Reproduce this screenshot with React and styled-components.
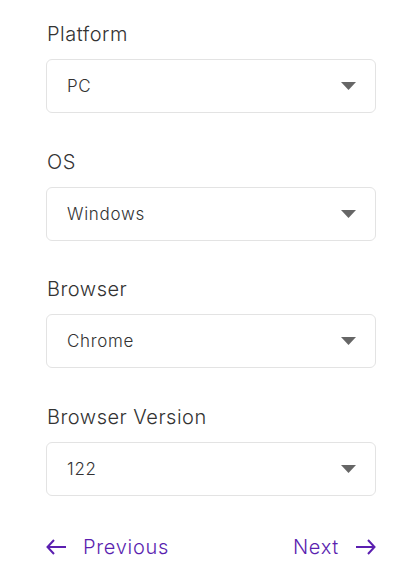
import React from 'react';
import styled, { createGlobalStyle } from 'styled-components';

const GlobalStyle = createGlobalStyle`
  body {
    margin: 0;
    background: #fff;
    font-family: 'Inter', 'Noto Sans', sans-serif;
  }
`;

const Form = styled.div`
  width: 330px;
  padding: 22px 0 0 46px;
  display: flex;
  flex-direction: column;
  gap: 36.67px;
`;

const Field = styled.div`
  display: flex;
  flex-direction: column;
  gap: 13px;
`;

const Label = styled.label`
  font-size: 20px;
  font-weight: 300;
  letter-spacing: 0.5px;
  line-height: 24px;
  color: #333;
  padding-left: 1px;
`;

const Select = styled.div`
  height: 54px;
  box-sizing: border-box;
  border: 1px solid #e3e3e3;
  border-radius: 6px;
  display: flex;
  align-items: center;
  justify-content: space-between;
  padding: 0 19px 0 20px;
  font-size: 17px;
  font-weight: 300;
  letter-spacing: 0.7px;
  color: #333;
`;

const Caret = styled.svg`
  width: 15px;
  height: 8px;
  fill: #666;
`;

const Nav = styled.div`
  display: flex;
  justify-content: space-between;
  align-items: center;
  margin-top: 2px;
`;

const NavButton = styled.button`
  display: flex;
  align-items: center;
  gap: 16px;
  background: none;
  border: none;
  padding: 0;
  font-family: inherit;
  font-size: 20px;
  font-weight: 300;
  letter-spacing: 0.7px;
  color: #5b1fb0;
  cursor: pointer;
`;

const Arrow = ({ dir }) => (
  <svg width="21" height="16" viewBox="0 0 21 16" fill="none" stroke="#5b1fb0" strokeWidth="2">
    {dir === 'left' ? (
      <path d="M20 8H2M8 1L1.5 8L8 15" />
    ) : (
      <path d="M1 8H19M13 1L19.5 8L13 15" />
    )}
  </svg>
);

const fields = [
  ['Platform', 'PC'],
  ['OS', 'Windows'],
  ['Browser', 'Chrome'],
  ['Browser Version', '122'],
];

export default function App() {
  return (
    <>
      <GlobalStyle />
      <Form>
        {fields.map(([label, value]) => (
          <Field key={label}>
            <Label>{label}</Label>
            <Select>
              <span>{value}</span>
              <Caret viewBox="0 0 15 8">
                <path d="M0 0H15L7.5 8Z" />
              </Caret>
            </Select>
          </Field>
        ))}
        <Nav>
          <NavButton>
            <Arrow dir="left" />
            Previous
          </NavButton>
          <NavButton>
            Next
            <Arrow dir="right" />
          </NavButton>
        </Nav>
      </Form>
    </>
  );
}
